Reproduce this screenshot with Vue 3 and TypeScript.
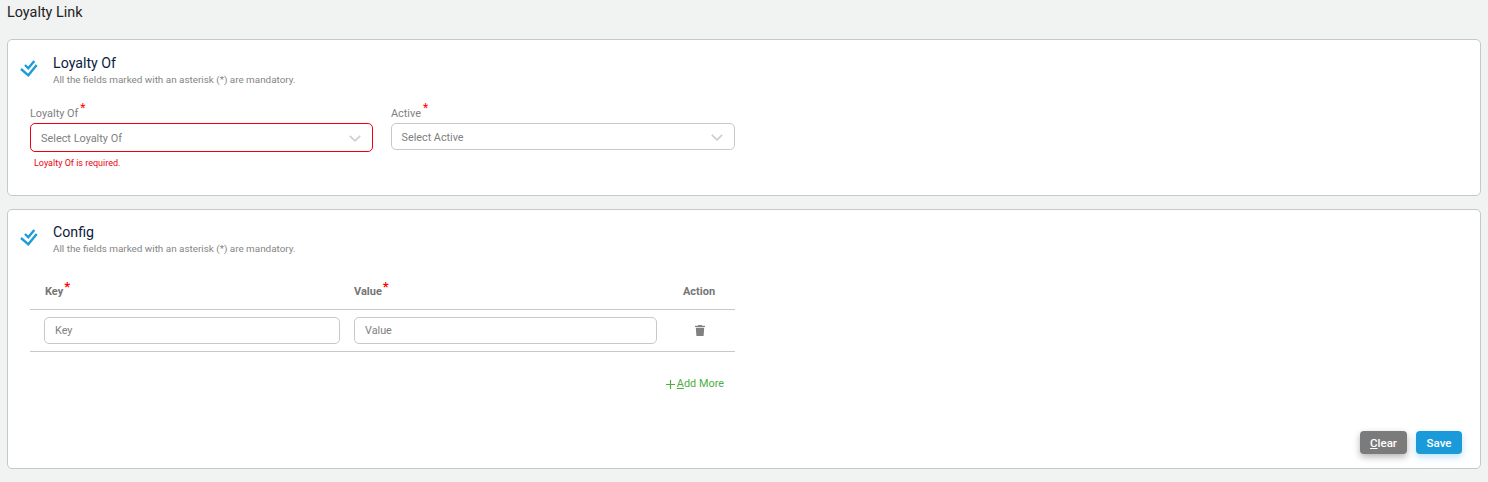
<script setup lang="ts">
interface Field { label: string; placeholder: string; error?: string }
const fields: Field[] = [
  { label: 'Loyalty Of', placeholder: 'Select Loyalty Of', error: 'Loyalty Of is required.' },
  { label: 'Active', placeholder: 'Select Active' },
]
const note = 'All the fields marked with an asterisk (*) are mandatory.'
</script>

<template>
  <div class="page">
    <h1 class="title">Loyalty Link</h1>

    <section class="card card-one">
      <header class="head">
        <svg class="tick" width="18" height="18" viewBox="0 0 18 18" fill="none" stroke="#1c9cd8" stroke-width="2.4">
          <path d="M5 5 8.3 8.3 14.3 1" />
          <path d="M1 9 8.3 15.3 16.7 5" />
        </svg>
        <div>
          <h2>Loyalty Of</h2>
          <p>{{ note }}</p>
        </div>
      </header>
      <div class="fields">
        <div v-for="f in fields" :key="f.label" class="field">
          <label>{{ f.label }}<sup>*</sup></label>
          <div class="select" :class="{ invalid: f.error }">
            <span>{{ f.placeholder }}</span>
            <svg width="12" height="7" viewBox="0 0 12 7" fill="none" stroke="#cfcfcf" stroke-width="1.8">
              <path d="M.8.8 6 5.8 11.2.8" />
            </svg>
          </div>
          <div v-if="f.error" class="error">{{ f.error }}</div>
        </div>
      </div>
    </section>

    <section class="card card-two">
      <header class="head">
        <svg class="tick" width="18" height="18" viewBox="0 0 18 18" fill="none" stroke="#1c9cd8" stroke-width="2.4">
          <path d="M5 5 8.3 8.3 14.3 1" />
          <path d="M1 9 8.3 15.3 16.7 5" />
        </svg>
        <div>
          <h2>Config</h2>
          <p>{{ note }}</p>
        </div>
      </header>

      <div class="table">
        <div class="row thead">
          <div class="th key">Key<sup>*</sup></div>
          <div class="th">Value<sup>*</sup></div>
          <div class="th action">Action</div>
        </div>
        <div class="row tbody">
          <input class="input" placeholder="Key" />
          <input class="input" placeholder="Value" />
          <div class="trash">
            <svg width="10" height="11" viewBox="0 0 10 11" fill="#808080">
              <path d="M3.4 0h3.2l.5.7H10v1.2H0V.7h2.9zM.8 2.7h8.4L8.6 11H1.4z" />
            </svg>
          </div>
        </div>
      </div>

      <div class="add-row">
        <span class="add">
          <svg width="9" height="9" viewBox="0 0 9 9" stroke="#4caf3e" stroke-width="1.2"><path d="M4.5 0v9M0 4.5h9" /></svg>
          <span><u>A</u>dd More</span>
        </span>
      </div>

      <div class="actions">
        <button class="btn clear" type="button"><u>C</u>lear</button>
        <button class="btn save" type="button">Save</button>
      </div>
    </section>
  </div>
</template>

<style>
html, body { margin: 0; background: #f1f2f2; }
</style>

<style scoped>
.page {
  box-sizing: border-box;
  height: 482px;
  padding: 4px 7px 0;
  font-family: Roboto, "Liberation Sans", sans-serif;
  background: #f1f2f2;
  overflow: hidden;
}
.title {
  margin: 0 0 18px;
  height: 17px;
  font-size: 14.4px;
  line-height: 17px;
  font-weight: 400;
  color: #222;
}
.card {
  box-sizing: border-box;
  display: flex;
  flex-direction: column;
  background: #fff;
  border: 1px solid #c8c8c8;
  border-radius: 5px;
  padding: 14px 22px 0 13px;
}
.card-one { height: 157px; margin-bottom: 13px; padding-top: 15px; }
.card-two { height: 260px; }
.head { display: flex; gap: 15px; align-items: flex-start; }
.tick { margin: 5px 0 0 -1px; flex: none; }
.head h2 {
  margin: 0;
  font-size: 14.2px;
  line-height: 17px;
  font-weight: 400;
  color: #0d1b3e;
}
.head p {
  margin: 2px 0 0;
  font-size: 9.9px;
  line-height: 11px;
  color: #858585;
}
.fields {
  display: grid;
  grid-template-columns: 343px 344px;
  column-gap: 18px;
  margin: 20px 0 0 9px;
}
.field label {
  display: block;
  height: 18px;
  font-size: 10.9px;
  line-height: 18px;
  color: #808080;
}
.field sup { vertical-align: 5px; margin-left: 2px; }
sup { color: #f00; font-size: 12px; line-height: 0; vertical-align: 3px; margin-left: 1px; }
.select {
  box-sizing: border-box;
  height: 27px;
  display: flex;
  align-items: center;
  justify-content: space-between;
  padding: 1px 11px 0 9.5px;
  background: #fff;
  border: 1px solid #c8c8c8;
  border-radius: 5px;
  font-size: 10.8px;
  color: #808080;
}
.select.invalid { border-color: #ee0011; height: 29px; padding-left: 10px; font-size: 10.9px; }
.error {
  margin: 5px 0 0 4px;
  font-size: 9px;
  line-height: 12px;
  color: #ee0011;
}
.table { width: 705px; margin: 19px 0 0 9px; }
.row {
  display: grid;
  grid-template-columns: 296px 303px 58px;
  column-gap: 14px;
  padding-left: 14px;
  padding-right: 6px;
  box-sizing: border-box;
  align-items: center;
}
.thead { height: 37px; border-bottom: 1px solid #c8c8c8; padding-top: 1px; }
.tbody { height: 42px; border-bottom: 1px solid #c8c8c8; }
.th { font-size: 11px; font-weight: 700; color: #757575; }
.th.key { padding-left: 1px; }
.th sup { font-size: 13px; vertical-align: 4px; }
.action { text-align: center; display: flex; justify-content: center; margin-left: -2px; }
.trash { display: flex; justify-content: center; }
.input {
  box-sizing: border-box;
  width: 100%;
  height: 27px;
  padding: 0 10px;
  border: 1px solid #c8c8c8;
  border-radius: 5px;
  font: 400 10.8px Roboto, sans-serif;
  color: #808080;
  background: #fff;
  outline: none;
}
.input::placeholder { color: #808080; opacity: 1; }
.add-row { width: 694px; margin: 25px 0 0 9px; display: flex; justify-content: flex-end; }
.add {
  display: inline-flex;
  align-items: center;
  gap: 2px;
  font-size: 10.9px;
  line-height: 14px;
  color: #4caf3e;
}
.actions {
  margin-top: auto;
  margin-right: -4px;
  margin-bottom: 14px;
  display: flex;
  justify-content: flex-end;
  gap: 9px;
}
.btn {
  height: 23px;
  border: 0;
  border-radius: 4px;
  padding: 0;
  font: 500 11.5px Roboto, sans-serif;
  color: #fff;
}
.clear { width: 47px; background: #7b7b7b; box-shadow: 0 3px 7px rgba(0,0,0,.3); }
.save { width: 46px; background: #1a9ad9; box-shadow: 0 3px 7px rgba(26,154,217,.3); }
</style>
